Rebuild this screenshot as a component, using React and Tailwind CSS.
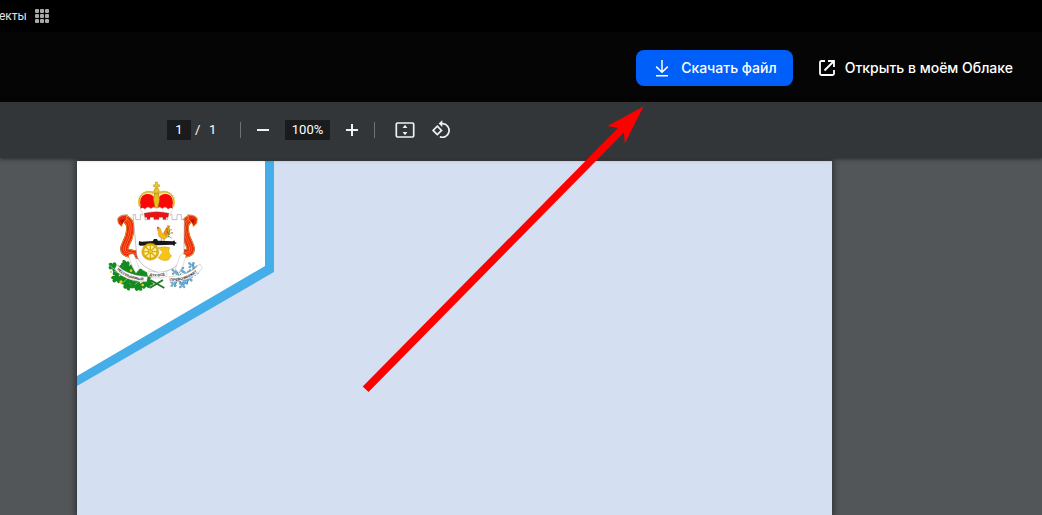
import React, { useState } from 'react';

const ICON_BUTTON = 'flex h-9 w-9 shrink-0 items-center justify-center text-[#f1f1f1]';
const FIELD = 'h-5 shrink-0 bg-[#191b1c] text-center text-[13px] leading-5 text-white outline-none';

const AppsIcon = () => (
  <svg width="14" height="14" viewBox="0 0 14 14" fill="#a9a9ad">
    {[0, 5, 10].map((y) =>
      [0, 5, 10].map((x) => <rect key={`${x}-${y}`} x={x} y={y} width="4" height="4" rx="1" />)
    )}
  </svg>
);

const DownloadIcon = () => (
  <svg width="14" height="18" viewBox="0 0 14 18" fill="none" stroke="currentColor" strokeWidth="1.5">
    <path d="M7 1v12M1.2 7.6L7 13.2l5.8-5.6M1 16.8h12" />
  </svg>
);

const OpenIcon = () => (
  <svg width="16" height="16" viewBox="0 0 16 16" fill="none" stroke="currentColor" strokeWidth="1.8">
    <path d="M6 1H2.5Q1 1 1 2.5v11Q1 15 2.5 15h11q1.500 0 1.500-1.500V10" />
    <path d="M9 1h6v6M15 1L5.500 10.500" />
  </svg>
);

const FitIcon = () => (
  <svg width="20" height="16" viewBox="0 0 20 16" fill="none" stroke="currentColor" strokeWidth="1.700">
    <rect x="1.300" y="1" width="17.400" height="14" rx="1.200" />
    <path d="M10 2.800L12.400 6H7.600zM10 13.200L12.400 10H7.600z" fill="currentColor" stroke="none" />
  </svg>
);

const RotateIcon = () => (
  <svg width="20" height="20" viewBox="0 0 20 20" fill="none" stroke="currentColor" strokeWidth="1.700">
    <path d="M6.300 6.200l4.200 4.200-4.200 4.200-4.200-4.200z" />
    <path d="M9 3.600h2.500a6.800 6.800 0 1 1-2.700 13.100" />
    <path d="M11.300 .2v6.800L7.600 3.600z" fill="currentColor" stroke="none" />
  </svg>
);

const RIBBON_PATH = 'M92 148C110 156 108 178 101 202C92 224 82 238 92 246C104 254 124 250 150 258';

// Half of the St. George ribbon, mirrored for the other side
const Ribbon = () => (
  <g fill="none" strokeLinejoin="round">
    <path d={RIBBON_PATH} stroke="#7a4a14" strokeWidth="25" />
    <path d={RIBBON_PATH} stroke="#ff9c28" strokeWidth="23" />
    <path d={RIBBON_PATH} stroke="#f02a10" strokeWidth="19" />
    <path d={RIBBON_PATH} stroke="#ff8c20" strokeWidth="7" />
    <path d={RIBBON_PATH} stroke="#f02a10" strokeWidth="4" />
    <path d="M68 148Q72 135 98 135Q92 142 96 148L84 158L80 170Q66 162 68 148z" fill="#ee2810" stroke="#ffae2a" strokeWidth="2" />
    <path d="M76 150Q82 145 90 150L82 162Q75 158 76 150z" fill="#b81408" />
    <path d="M67 148Q71 134 98 134" stroke="#7a4a14" strokeWidth="1" />
  </g>
);

const OAK_LEAVES = [
  [58, 292, 35], [72, 306, -20], [94, 288, 60], [68, 326, 10], [98, 316, -40], [84, 298, 0],
  [116, 332, 20], [94, 342, 60], [130, 312, -30], [150, 320, 40], [154, 342, -10], [124, 348, 30], [112, 298, 20],
];

const FLAX = [
  [240, 306], [258, 300], [290, 286], [302, 304], [284, 326], [268, 334], [248, 328], [292, 308], [262, 346], [236, 342], [274, 312],
];

const Emblem = () => (
  <svg width="95" height="110" viewBox="39 33 285 330" role="img" aria-label="Герб">
    <defs>
      <path id="mottoLeft" d="M66 298C82 318 112 330 155 332" />
      <path id="mottoMiddle" d="M163 317C178 321 194 321 214 315" />
      <path id="mottoRight" d="M226 333C262 334 292 322 316 297" />
    </defs>

    {/* Crown */}
    <path d="M136 112C122 78 152 55 184 68C216 55 247 78 233 112L222 140H147z" fill="#f7eda3" stroke="#9b8640" strokeWidth="1.500" />
    <path d="M138 118C128 84 144 70 160 72Q176 74 180 90v30l-38 2z" fill="#f80808" />
    <path d="M231 118C241 84 225 70 209 72Q193 74 189 90v30l38 2z" fill="#f80808" />
    <path d="M134 108C124 76 154 54 180 72M235 108C245 76 215 54 189 72" fill="none" stroke="#ead04e" strokeWidth="7" strokeDasharray="5 2" />
    <path d="M134 108C124 76 154 54 180 72M235 108C245 76 215 54 189 72" fill="none" stroke="#88743b" strokeWidth="1" />
    <path d="M180 69h9l5 18-5 27h-9l-5-27z" fill="#e7bd22" stroke="#8a6a10" strokeWidth="1.500" />
    <circle cx="184.500" cy="62" r="8" fill="#f0c526" stroke="#94721a" />
    <path d="M181 54v-4h-6v-6h6v-8h7v8h6v6h-6v4z" fill="#f0c526" stroke="#94721a" />

    <Ribbon />
    <g transform="matrix(-1 0 0 1 375 0)">
      <Ribbon />
    </g>

    {/* Shield */}
    <path d="M114 134h8v15h14v-15h14v15h13v-15h13v15h15v-15h13v15h14v-15h13v15h15v-15h13v15h9l-1 94c0 34-30 56-71 66c-43-10-72-33-72-66z" fill="#fff" stroke="#858585" strokeWidth="1.500" />

    {/* Crown band */}
    <path d="M135 118q8-8 15 0q8-12 18-2q8-9 17 0q9-9 17 0q9-10 17 2q9-8 15 0q-8 9-9 20q-40-12-80 0q-1-11-10-20z" fill="#fff" stroke="#c9bfba" strokeWidth="1.200" />
    <path d="M147 130q38-10 75 0l-3 12h-6v6h-9v-6h-12v6h-15v-6h-12v6h-9v-6h-6z" fill="#ea1212" stroke="#8b5a58" />

    {/* Gamayun bird */}
    <g stroke="#9c650c" strokeWidth="1">
      <path d="M186 179q1-11 7-6c8 4 3 16 12 18q8-17 14-26q9 10 5 25q-4 14-17 17q-18-2-17-17q1-9-4-11z" fill="#f4b81b" />
      <path d="M207 189l8-15 4 12-6 12z" fill="#e79412" />
      <path d="M199 206v8M207 206v8" strokeWidth="2" />
    </g>
    <g fill="none" strokeWidth="3">
      <path d="M217 190q0-20 10-24M222 196q4-10 12-7" stroke="#e83428" strokeDasharray="6 3" />
      <path d="M220 193q2-15 10-14M219 200q7-1 10 5" stroke="#298045" strokeDasharray="5 3" />
    </g>
    <circle cx="189" cy="173" r="3" fill="#d94c35" />

    {/* Cannon */}
    <path d="M188 233q24-5 36 0q-7 17 6 24l-10 13q-14 6-31-6l14-18z" fill="#f5c414" stroke="#b68b0b" />
    <path d="M132 213l6 2 52-3 44 2 4-3 2 5 6 3-6 3-2 6-6-4-96 3-5-3z" fill="#171717" />
    <path d="M177 207h9l3 7h-16z" fill="#171717" />
    <circle cx="166" cy="245" r="22" fill="#fff3a8" stroke="#e3b207" strokeWidth="7" />
    <g stroke="#dcae0b" strokeWidth="4">
      <path d="M166 222v46M143 245h46M150 229l32 32M182 229l-32 32" />
    </g>
    <circle cx="166" cy="245" r="6" fill="#f5cc20" stroke="#a87e08" />
    <circle cx="166" cy="245" r="26" fill="none" stroke="#aa860d" strokeWidth="1" />

    {/* Oak and flax branches */}
    <g fill="#158a20">
      {OAK_LEAVES.map(([x, y, a]) => (
        <path
          key={`${x}-${y}`}
          transform={`translate(${x} ${y}) rotate(${a}) scale(1.2)`}
          d="M-17 0q3-7 8-5q0-8 6-6q5 2 5 5q5-7 10-2q4 4 2 6q6 2 3 5q-3 4-7 2q-2 8-8 5l-4-4q-4 8-9 3q-3-3 0-5q-5 0-6-4z"
        />
      ))}
    </g>
    <path d="M46 288l30 24 40 20 38 2M58 304l30 10M84 338l20-20M120 344l20-18" fill="none" stroke="#e6f4dc" strokeWidth="1.500" />
    <g fill="#edc926">
      <circle cx="78" cy="336" r="5" />
      <circle cx="108" cy="302" r="4" />
      <circle cx="143" cy="345" r="4" />
      <circle cx="48" cy="306" r="3" />
    </g>
    <path d="M164 354l40-24M166 330l42 24" stroke="#297528" strokeWidth="6" />
    <path d="M226 334q45-2 80-48M238 350l20-40M258 340l-12-38M276 344l10-46M300 318l-6-40" fill="none" stroke="#438560" strokeWidth="3" />
    {FLAX.map(([x, y]) => (
      <g key={`${x}-${y}`} transform={`translate(${x} ${y})`} fill="#70b4dd" stroke="#3d789d">
        <path d="M0 0q-13-2-9-9q6-2 9 9q2-13 9-8q2 6-9 8q12 1 7 8q-6 2-7-8q-3 12-9 7q-2-5 9-7z" />
        <circle r="2" fill="#fff" />
      </g>
    ))}

    {/* Motto band */}
    <g fill="#fff" stroke="#999" strokeWidth="1">
      <path d="M101 256q12-10 18 1q6 18 14 40l-10 13q-16-22-22-54zM273 256q-12-10-18 1q-6 18-14 40l10 13q16-22 22-54z" />
      <path d="M66 284q28 32 92 36l-3 15q-68 0-96-38zM315 282q-32 36-93 38l3 16q70-1 97-42z" />
      <path d="M160 303q26 8 54 0l2 16q-29 10-58 0z" />
    </g>
    <g fill="#222" fontFamily="Liberation Sans, sans-serif" fontSize="11" fontWeight="700">
      <text><textPath href="#mottoLeft">НЕСГИБАЕМЫЙ</textPath></text>
      <text><textPath href="#mottoMiddle">ДУХ ВСЁ</textPath></text>
      <text><textPath href="#mottoRight">ПРЕВОЗМОЖЕТ</textPath></text>
    </g>
  </svg>
);

const Toolbar = () => {
  const [page, setPage] = useState('1');
  const [zoom, setZoom] = useState(100);

  return (
    <div className="relative z-10 flex h-14 items-center bg-[#323639] pl-[167px] font-[Roboto,sans-serif] text-[13px] text-white shadow-[0_1px_4px_rgba(0,0,0,0.5)]">
      <input aria-label="Страница" className={`${FIELD} w-6`} value={page} onChange={(e) => setPage(e.target.value)} />
      <span className="ml-1 w-3.5">/</span>
      <span className="w-1.5">1</span>
      <span className="mr-1 ml-[25px] h-4 w-px bg-[#6f7275]"></span>
      <button aria-label="Уменьшить" className={ICON_BUTTON} onClick={() => setZoom(zoom - 10)}>
        <svg width="12" height="12" viewBox="0 0 12 12"><path d="M0 6h12" stroke="currentColor" strokeWidth="2" /></svg>
      </button>
      <input aria-label="Масштаб" className={`${FIELD} ml-1 w-[45px]`} value={`${zoom}%`} readOnly />
      <button aria-label="Увеличить" className={`${ICON_BUTTON} ml-1`} onClick={() => setZoom(zoom + 10)}>
        <svg width="12" height="12" viewBox="0 0 12 12"><path d="M0 6h12M6 0v12" stroke="currentColor" strokeWidth="2" /></svg>
      </button>
      <span className="mr-3 ml-1 h-4 w-px bg-[#6f7275]"></span>
      <button aria-label="По размеру страницы" className={ICON_BUTTON}><FitIcon /></button>
      <button aria-label="Повернуть" className={ICON_BUTTON}><RotateIcon /></button>
    </div>
  );
};

const Document = () => (
  <main className="mt-[3px] mr-[210px] ml-[77px] flex-1 bg-[#d4dff1] shadow-[0_0_6px_2px_rgba(0,0,0,0.4)]">
    <div className="relative h-[226px] w-[197px]">
      <svg className="block" width="197" height="226" viewBox="0 0 197 226">
        <path d="M0 0h197v111L0 225z" fill="#45aee8" />
        <path d="M0 0h188v105L0 215z" fill="#fff" />
      </svg>
      <div className="absolute top-5 left-[31px]"><Emblem /></div>
    </div>
  </main>
);

export default function App() {
  return (
    <div className="relative flex min-h-screen flex-col overflow-hidden bg-[#525659]">
      <nav className="flex h-8 items-center gap-2 bg-black text-xs text-[#e4e4e4]">
        <a href="#projects" className="-ml-px font-[Roboto,sans-serif]">екты</a>
        <button aria-label="Все проекты"><AppsIcon /></button>
      </nav>

      <header className="flex h-[70px] items-center justify-end gap-[26px] bg-[#050505] pt-0.5 pr-[29px] font-[Inter,sans-serif] text-sm font-medium text-white">
        <button className="flex h-9 items-center gap-3 rounded-lg bg-[#005ff9] pr-4 pl-[19px]">
          <DownloadIcon />
          Скачать файл
        </button>
        <a href="#cloud" className="flex items-center gap-2.5">
          <OpenIcon />
          Открыть в моём Облаке
        </a>
      </header>

      <Toolbar />
      <Document />

      {/* Pointer to the download button */}
      <svg className="pointer-events-none absolute top-[106px] left-[362px] z-20" width="282" height="287" viewBox="362 106 282 287">
        <path d="M643.500 106.500L607.500 126L618 128L362.700 386.500L368.500 392L624 132.500L624.800 143.500z" fill="#fe0000" />
      </svg>
    </div>
  );
}
